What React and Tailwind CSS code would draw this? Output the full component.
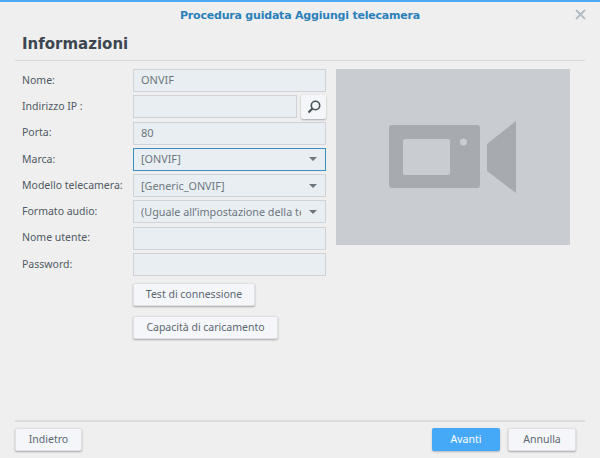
import React from 'react';

const font = 'font-["Noto_Sans",sans-serif]';

const TextRow = ({ label, value }) => (
    <div className="flex items-center h-[23px]">
        <label className="w-[111px] shrink-0 text-[10.5px] text-[#505a64]">{label}</label>
        <div className="w-[193px] h-full flex items-center pl-[7px] bg-[#e9eef2] border border-[#cfd3d7] text-[11px] text-[#6d7780]">
            {value}
        </div>
    </div>
);

const SelectRow = ({ label, value, focused }) => (
    <div className="flex items-center h-[23px]">
        <label className="w-[111px] shrink-0 text-[10.5px] text-[#505a64]">{label}</label>
        <div className={`w-[193px] h-full flex items-center pl-[7px] pr-[8px] bg-[#e9eef2] border text-[10.8px] text-[#6d7780] ${focused ? 'border-[#3a8fc4]' : 'border-[#cfd3d7]'}`}>
            <span className="flex-1 overflow-hidden whitespace-nowrap">{value}</span>
            <span className="ml-[8px] w-0 h-0 border-x-[4.5px] border-x-transparent border-t-[4px] border-t-[#6d7780]" />
        </div>
    </div>
);

const Button = ({ children, className = '' }) => (
    <button className={`h-[23px] flex items-center justify-center bg-[#f4f6fa] border border-[#dfe1e5] rounded-[2px] shadow-[0_1px_2px_rgba(0,0,0,0.3)] text-[10.5px] text-[#5c6670] ${className}`}>
        {children}
    </button>
);

const CameraIcon = () => (
    <svg width="128" height="74" viewBox="0 0 128 74">
        <rect x="0" y="5" width="91" height="63" rx="3" fill="#a7abaf" />
        <rect x="14" y="19" width="47" height="36" rx="2" fill="#c9ccd1" />
        <circle cx="74.5" cy="22" r="3.5" fill="#c9ccd1" />
        <path d="M98 24 L127 1 L127 73 L98 51 Z" fill="#a7abaf" />
    </svg>
);

const App = () => {
    return (
        <div className={`w-[600px] h-[458px] bg-[#efefef] flex flex-col border-t-2 border-[#4aa8f5] ${font}`}>
            {/* title bar */}
            <div className="relative h-[26px] flex items-center justify-center">
                <span className="font-['DejaVu_Sans'] text-[11px] tracking-[-0.2px] font-bold text-[#2a80b9] mt-[2px]">Procedura guidata Aggiungi telecamera</span>
                <svg className="absolute right-[14px] top-[7px]" width="11" height="11" viewBox="0 0 11 11">
                    <path d="M1 1 L10 10 M10 1 L1 10" stroke="#b4bcc2" strokeWidth="1.8" />
                </svg>
            </div>

            <div className="mx-[15px] h-[33px] flex items-center border-b border-[#d8d8d8] pl-[7px]">
                <h1 className="font-['DejaVu_Sans'] text-[15px] font-bold text-[#3d4650]">Informazioni</h1>
            </div>

            {/* form and preview */}
            <div className="flex-1 flex pl-[22px] pt-[8px]">
                <div className="w-[314px] flex flex-col">
                    <div className="flex flex-col gap-[3.3px]">
                        <TextRow label="Nome:" value="ONVIF" />
                        <div className="flex items-center h-[23px]">
                            <label className="w-[111px] shrink-0 text-[10.5px] text-[#505a64]">Indirizzo IP :</label>
                            <div className="w-[164px] h-full bg-[#e9eef2] border border-[#cfd3d7]" />
                            <button className="ml-[4px] w-[25px] h-[24px] flex items-center justify-center bg-[#f4f6fa] rounded-[2px] shadow-[0_1px_2px_rgba(0,0,0,0.3)]">
                                <svg width="14" height="14" viewBox="0 0 14 14" fill="none">
                                    <circle cx="8.5" cy="5.5" r="4.2" stroke="#4a5258" strokeWidth="1.6" />
                                    <path d="M5.5 8.5 L1.5 12.5" stroke="#4a5258" strokeWidth="2.2" />
                                </svg>
                            </button>
                        </div>
                        <TextRow label="Porta:" value="80" />
                        <SelectRow label="Marca:" value="[ONVIF]" focused />
                        <SelectRow label="Modello telecamera:" value="[Generic_ONVIF]" />
                        <SelectRow label="Formato audio:" value="(Uguale all’impostazione della telecamera)" />
                        <TextRow label="Nome utente:" value="" />
                        <TextRow label="Password:" value="" />
                    </div>
                    <div className="mt-[7px] ml-[111px] flex flex-col items-start gap-[10px]">
                        <Button className="w-[122px]">Test di connessione</Button>
                        <Button className="w-[145px]">Capacità di caricamento</Button>
                    </div>
                </div>
                <div className="w-[234px] h-[176px] bg-[#c9ccd1] flex items-center justify-center">
                    <CameraIcon />
                </div>
            </div>

            {/* footer */}
            <div className="mx-[15px] h-[38px] border-t-2 border-[#dcdcdc] pt-[6px] flex items-start">
                <Button className="w-[67px]">Indietro</Button>
                <div className="flex-1" />
                <button className="w-[68px] h-[23px] flex items-center justify-center bg-[#46a9f8] rounded-[2px] shadow-[0_1px_2px_rgba(0,0,0,0.25)] text-[10.5px] text-white">Avanti</button>
                <Button className="w-[68px] ml-[8px] mr-[9px]">Annulla</Button>
            </div>
        </div>
    );
};

export default App;
